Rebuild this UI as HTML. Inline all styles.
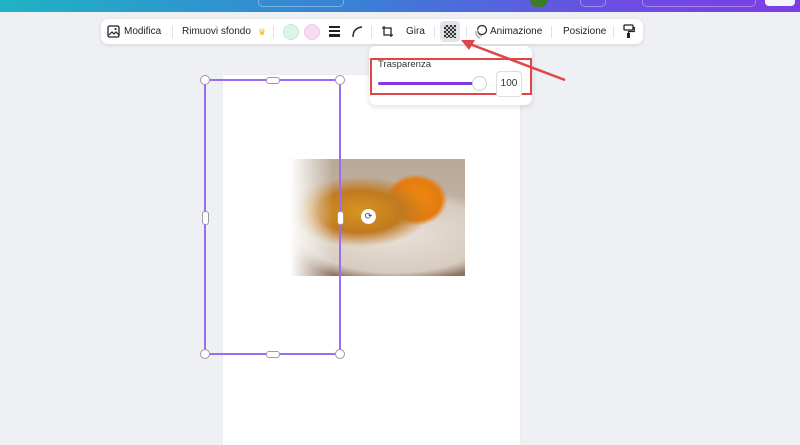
<!DOCTYPE html>
<html><head><style>
body{margin:0;width:800px;height:437px;background:#eef0f4;position:relative;overflow:hidden;font-family:"Liberation Sans",sans-serif;}
.abs{position:absolute}
.top{left:0;top:0;width:800px;height:12px;background:linear-gradient(90deg,#1fb3c4 0%,#3a7fd6 45%,#6a4fe2 75%,#7d3de6 100%)}
.tb{left:101px;top:19px;width:542px;height:25px;background:#fff;border-radius:7px;box-shadow:0 1px 4px rgba(0,0,0,.12);font-size:10px;color:#1c1f26}
.tb span{position:absolute;top:7px}
.sep{position:absolute;top:7px;width:1px;height:12px;background:#dde0e5}
.pop{left:369px;top:46px;width:163px;height:59px;background:#fff;border-radius:7px;box-shadow:0 2px 6px rgba(0,0,0,.12)}
.h{width:8px;height:8px;border-radius:50%;background:#fff;border:1px solid #9a9aa8;position:absolute}
</style></head><body>
<div class="abs top"></div>
<div class="abs" style="left:258px;top:0;width:84px;height:6px;border:1px solid rgba(255,255,255,.35);border-top:none;border-radius:0 0 5px 5px"></div>
<div class="abs" style="left:530px;top:0;width:18px;height:7px;border-radius:0 0 9px 9px;background:#3d7a2a"></div>
<div class="abs" style="left:580px;top:0;width:24px;height:6px;border:1px solid rgba(255,255,255,.35);border-top:none;border-radius:0 0 5px 5px"></div>
<div class="abs" style="left:642px;top:0;width:112px;height:6px;border:1px solid rgba(255,255,255,.35);border-top:none;border-radius:0 0 5px 5px"></div>
<div class="abs" style="left:765px;top:0;width:30px;height:6px;background:#f4f4f8;border-radius:0 0 4px 4px"></div>

<div class="abs" style="left:223px;top:75px;width:297px;height:370px;background:#fff;box-shadow:0 0 2px rgba(0,0,0,.05)"></div>

<div class="abs tb">
<svg style="position:absolute;left:6px;top:6px" width="13" height="13" viewBox="0 0 13 13"><rect x="1" y="1" width="11" height="11" rx="1.5" fill="none" stroke="#222" stroke-width="1.3"/><path d="M2 10l3-3 2 2 2-2 3 3" fill="none" stroke="#222" stroke-width="1.2"/><circle cx="8.5" cy="4" r="1" fill="#222"/></svg>
<span style="left:23px">Modifica</span>
<div class="sep" style="left:71px"></div>
<span style="left:81px">Rimuovi sfondo</span><span style="left:157px;color:#f0b429;font-size:9px;top:8px">♛</span>
<div class="sep" style="left:172px"></div>
<div class="abs" style="left:182px;top:5px;width:14px;height:14px;border-radius:50%;background:#d8f5e6;border:1px solid #c5e8d4"></div>
<div class="abs" style="left:203px;top:5px;width:14px;height:14px;border-radius:50%;background:#f9dbf6;border:1px solid #ecc8ea"></div>
<div class="abs" style="left:228px;top:7px;width:11px;height:2px;background:#222"></div>
<div class="abs" style="left:228px;top:11px;width:11px;height:2px;background:#222"></div>
<div class="abs" style="left:228px;top:15px;width:11px;height:2.5px;background:#222"></div>
<svg style="position:absolute;left:250px;top:6px" width="12" height="13"><path d="M2 12Q2 3 11 2" fill="none" stroke="#222" stroke-width="1.4"/></svg>
<div class="sep" style="left:270px"></div>
<svg style="position:absolute;left:280px;top:6px" width="13" height="13"><path d="M3 1v9h9M1 3h9v9" fill="none" stroke="#222" stroke-width="1.3"/></svg>
<span style="left:305px">Gira</span>
<div class="sep" style="left:333px"></div>
<div class="abs" style="left:339px;top:2px;width:20px;height:21px;background:#e3e4e8;border-radius:4px"></div>
<div class="abs" style="left:343px;top:6px;width:12px;height:13px;background:repeating-conic-gradient(#333 0 25%,#ccc 0 50%) 0 0/4px 4px"></div>
<div class="sep" style="left:365px"></div>
<svg style="position:absolute;left:372px;top:5px" width="15" height="15"><circle cx="9" cy="6" r="4.5" fill="none" stroke="#222" stroke-width="1.2"/><path d="M5 5a5 5 0 0 0 4 7M3 7a6 6 0 0 0 4 7" fill="none" stroke="#999" stroke-width="1"/></svg>
<span style="left:389px">Animazione</span>
<div class="sep" style="left:450px"></div>
<span style="left:462px">Posizione</span>
<div class="sep" style="left:512px"></div>
<svg style="position:absolute;left:522px;top:5px" width="12" height="15"><rect x="1" y="1" width="9" height="5" rx="1" fill="none" stroke="#222" stroke-width="1.3"/><path d="M10 3.5h1.3v4H5.5v2" fill="none" stroke="#222" stroke-width="1.2"/><rect x="4" y="9" width="3" height="5" fill="#222"/></svg>
</div>

<div class="abs pop"></div>
<div class="abs" style="left:370px;top:58px;width:162px;height:37px;border:2px solid #e0454a;box-sizing:border-box"></div>
<div class="abs" style="left:378px;top:59px;font-size:9.5px;color:#333">Trasparenza</div>
<div class="abs" style="left:378px;top:82px;width:100px;height:3px;background:#7d3de6;border-radius:2px"></div>
<div class="abs" style="left:472px;top:76px;width:13px;height:13px;border-radius:50%;background:#fff;border:1px solid #ccc"></div>
<div class="abs" style="left:496px;top:71px;width:24px;height:24px;border:1px solid #ddd;border-radius:4px;background:#fff;font-size:10px;color:#333;text-align:center;line-height:24px">100</div>

<svg class="abs" style="left:455px;top:35px" width="115" height="50"><path d="M110 45L12 8" stroke="#e0454a" stroke-width="2.5"/><path d="M6 5l14 0-6 10z" fill="#e0454a"/></svg>

<div class="abs" style="left:290px;top:159px;width:175px;height:117px;background:linear-gradient(90deg,rgba(255,255,255,1) 0%,rgba(255,255,255,0) 25%),radial-gradient(ellipse 40% 30% at 40% 45%,#d8941f 0%,#c07a20 60%,rgba(0,0,0,0) 100%),radial-gradient(ellipse 18% 22% at 72% 35%,#f08a10 0%,#e57b10 80%,rgba(0,0,0,0) 100%),radial-gradient(ellipse 65% 40% at 60% 65%,#e8e0d8 0%,#d8ccc0 80%,rgba(0,0,0,0) 100%),linear-gradient(180deg,#b8a898,#c4b4a4 50%,#8e7262)"></div>
<div class="abs" style="left:361px;top:209px;width:15px;height:15px;border-radius:50%;background:#fff;color:#333;font-size:9px;text-align:center;line-height:15px">⟳</div>

<div class="abs" style="left:204px;top:79px;width:2px;height:276px;background:#9b6cf2"></div>
<div class="abs" style="left:339px;top:79px;width:2px;height:276px;background:#9b6cf2"></div>
<div class="abs" style="left:204px;top:79px;width:137px;height:2px;background:#9b6cf2"></div>
<div class="abs" style="left:204px;top:353px;width:137px;height:2px;background:#9b6cf2"></div>
<div class="h" style="left:200px;top:75px"></div><div class="h" style="left:335px;top:75px"></div>
<div class="h" style="left:200px;top:349px"></div><div class="h" style="left:335px;top:349px"></div>
<div class="abs" style="left:266px;top:77px;width:12px;height:5px;border-radius:3px;background:#fff;border:1px solid #9a9aa8"></div>
<div class="abs" style="left:266px;top:351px;width:12px;height:5px;border-radius:3px;background:#fff;border:1px solid #9a9aa8"></div>
<div class="abs" style="left:202px;top:211px;width:5px;height:12px;border-radius:3px;background:#fff;border:1px solid #9a9aa8"></div>
<div class="abs" style="left:337px;top:211px;width:5px;height:12px;border-radius:3px;background:#fff;border:1px solid #9a9aa8"></div>
</body></html>
